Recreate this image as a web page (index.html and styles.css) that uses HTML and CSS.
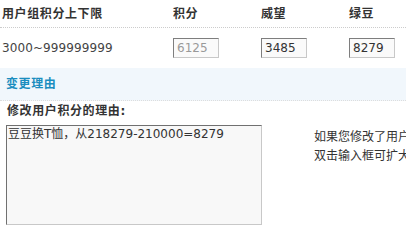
FILE: index.html
```html
<!DOCTYPE html>
<html lang="zh-CN">
<head>
<meta charset="utf-8">
<title>用户积分</title>
<link rel="stylesheet" href="styles.css">
</head>
<body>
<div class="page">
  <div class="grid head">
    <div class="cell">用户组积分上下限</div>
    <div class="cell">积分</div>
    <div class="cell">威望</div>
    <div class="cell">绿豆</div>
  </div>
  <div class="grid vals">
    <div class="cell range">3000~999999999</div>
    <div class="cell"><input class="num ro" type="text" value="6125" readonly></div>
    <div class="cell"><input class="num" type="text" value="3485"></div>
    <div class="cell"><input class="num" type="text" value="8279"></div>
  </div>
  <div class="band">变更理由</div>
  <div class="reason">
    <div class="label">修改用户积分的理由:</div>
    <div class="reason-row">
      <textarea class="area">豆豆换T恤，从218279-210000=8279</textarea>
      <div class="tip">
        <div>如果您修改了用户积分，请在此输入修改的理由</div>
        <div>双击输入框可扩大/缩小</div>
      </div>
    </div>
  </div>
</div>
</body>
</html>
```

FILE: styles.css
```css
html, body {
  margin: 0;
  padding: 0;
  overflow: hidden;
  background: #fff;
}
body {
  font-family: "DejaVu Sans", "Noto Sans CJK SC", sans-serif;
  font-size: 12px;
  color: #333;
}
.page {
  width: 406px;
  overflow: hidden;
}
.grid {
  display: grid;
  grid-template-columns: 171px 88px 88px 57px;
  padding-left: 2px;
  align-items: center;
}
.head {
  height: 27px;
  border-bottom: 1px dotted #ccc;
  font-weight: bold;
  letter-spacing: 0.6px;
  color: #333;
  line-height: 20px;
}
.vals {
  height: 40px;
  color: #444;
}
.range {
  letter-spacing: 0.1px;
}
.num {
  box-sizing: border-box;
  width: 46px;
  height: 20px;
  margin: 0;
  padding: 0 0 0 3px;
  border: 1px solid #c8c8c8;
  border-top-color: #7e7e7e;
  border-left-color: #7e7e7e;
  background: #fafafa;
  font-family: "DejaVu Sans", sans-serif;
  font-size: 12px;
  color: #333;
  outline: none;
}
.ro {
  color: #999;
}
.band {
  height: 32px;
  line-height: 32px;
  padding-left: 6px;
  background: #f1f7fc;
  border-bottom: 1px dotted #ddd;
  font-weight: bold;
  letter-spacing: 0.6px;
  color: #1a8dbf;
}
.reason {
  padding-left: 6px;
}
.label {
  padding-left: 1px;
  line-height: 20px;
  font-weight: bold;
  letter-spacing: 0.6px;
  color: #333;
}
.reason-row {
  display: flex;
  align-items: flex-start;
  margin-top: 4px;
}
.area {
  flex: none;
  box-sizing: border-box;
  width: 256px;
  height: 100px;
  margin: 0;
  padding: 1px 1px;
  border: 1px solid #c8c8c8;
  border-top-color: #707070;
  border-left-color: #707070;
  background: #f8f8f8;
  font-family: "DejaVu Sans", "Noto Sans CJK SC", sans-serif;
  font-size: 12px;
  line-height: 15px;
  color: #333;
  resize: none;
  outline: none;
  overflow: hidden;
}
.tip {
  flex: none;
  margin-left: 52px;
  padding-top: 3px;
  line-height: 19px;
  white-space: nowrap;
  color: #333;
}
```
